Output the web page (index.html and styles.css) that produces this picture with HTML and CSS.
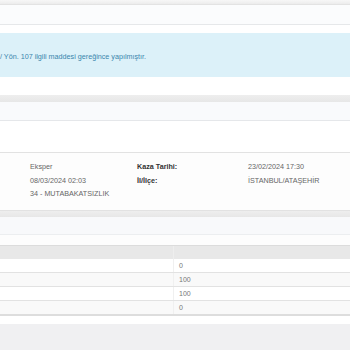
FILE: index.html
```html
<!DOCTYPE html>
<html>
<head>
<meta charset="utf-8">
<link rel="stylesheet" href="styles.css">
</head>
<body>
<div class="page">
  <div class="topbar"></div>
  <div class="panel-head"></div>
  <div class="gap8"></div>
  <div class="alert">/ Yön. 107 ilgili maddesi gereğince yapılmıştır.</div>
  <div class="gap18"></div>
  <div class="band"></div>
  <div class="sub-head"></div>
  <div class="blank"></div>
  <div class="info">
    <div class="info-grid">
      <span class="val c2">Eksper</span>
      <span class="lbl c3">Kaza Tarihi:</span>
      <span class="val c4">23/02/2024 17:30</span>
      <span class="val c2">08/03/2024 02:03</span>
      <span class="lbl c3">İl/İlçe:</span>
      <span class="val c4">İSTANBUL/ATAŞEHİR</span>
      <span class="val c2">34 - MUTABAKATSIZLIK</span>
    </div>
  </div>
  <div class="band band2"></div>
  <div class="sub-head2"></div>
  <div class="sub-gap"></div>
  <table class="tbl">
    <thead>
      <tr><th></th><th></th></tr>
    </thead>
    <tbody>
      <tr><td></td><td>0</td></tr>
      <tr><td></td><td>100</td></tr>
      <tr><td></td><td>100</td></tr>
      <tr><td></td><td>0</td></tr>
    </tbody>
  </table>
  <div class="gap9"></div>
  <div class="footer"></div>
</div>
</body>
</html>
```

FILE: styles.css
```css
html, body {
  margin: 0;
  padding: 0;
  background: #ffffff;
}
body {
  font-family: "Liberation Sans", Arial, sans-serif;
  color: #555555;
  width: 350px;
  height: 350px;
  overflow: hidden;
}
.page {
  display: flex;
  flex-direction: column;
}
.topbar {
  height: 4px;
  background: linear-gradient(#f7f7f7, #ececec);
  border-bottom: 1px solid #e3e3e3;
}
.panel-head {
  height: 19px;
  background: #fbfcfd;
  border-bottom: 1px solid #e6e8ea;
}
.gap8 { height: 8px; }
.alert {
  height: 44px;
  background: #dcf1f9;
  color: #3a86ad;
  font-size: 7.2px;
  display: flex;
  align-items: flex-end;
  padding-bottom: 16px;
  box-sizing: border-box;
  white-space: nowrap;
}
.gap18 { height: 18px; }
.band {
  height: 7px;
  background: linear-gradient(#eeeeee, #e7e7e7);
}
.sub-head {
  height: 18px;
  background: #f9fafc;
  border-bottom: 1px solid #e5e7ea;
}
.blank {
  height: 31px;
  background: #ffffff;
  border-bottom: 1px solid #e2e2e2;
}
.info {
  height: 58px;
  background: #fdfdfd;
  border-bottom: 1px solid #e2e2e2;
  padding-top: 7px;
  box-sizing: border-box;
}
.info-grid {
  display: grid;
  grid-template-columns: 30px 107px 111px 1fr;
  grid-auto-rows: 13.5px;
  font-size: 7.2px;
  align-items: center;
}
.c2 { grid-column: 2; }
.c3 { grid-column: 3; }
.c4 { grid-column: 4; }
.val { color: #666666; }
.lbl { color: #333333; font-weight: bold; }
.band2 {
  height: 6px;
}
.sub-head2 {
  height: 17px;
  background: #f8f9fb;
  border-bottom: 1px solid #eceef0;
}
.sub-gap {
  height: 10px;
  background: #fdfdfd;
  border-bottom: 1px solid #dcdcdc;
}
.tbl {
  width: 350px;
  border-collapse: collapse;
  table-layout: fixed;
  font-size: 7px;
  color: #777777;
}
.tbl th:first-child, .tbl td:first-child {
  width: 173px;
}
.tbl th {
  height: 13px;
  padding: 0;
  background: #e8e8e8;
  border-right: 1px solid #eeeeee;
}
.tbl th:last-child { border-right: none; }
.tbl td {
  height: 13px;
  padding: 0 0 0 5px;
  border-bottom: 1px solid #e2e2e2;
}
.tbl td:first-child {
  padding: 0;
  border-right: 1px solid #f0f0f0;
}
.tbl tbody tr:nth-child(even) td {
  background: #f9f9f9;
}
.tbl tbody tr:last-child td {
  border-bottom: 2px solid #dddddd;
}
.gap9 { height: 8px; }
.footer {
  height: 30px;
  background: #f0f0f2;
}
```
